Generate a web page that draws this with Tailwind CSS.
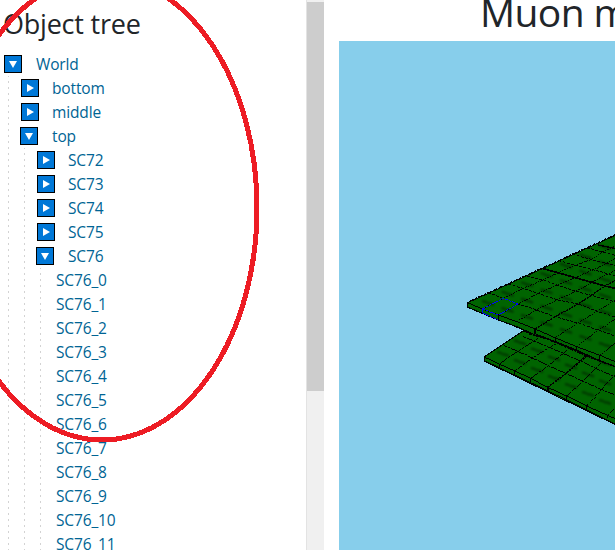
<!DOCTYPE html>
<html lang="en">
<head>
<meta charset="utf-8">
<title>Muon monitor</title>
<script src="https://cdn.jsdelivr.net/npm/@tailwindcss/browser@4"></script>
</head>
<body class="bg-white overflow-hidden">
<div class="relative flex w-[615px] h-[550px] overflow-hidden font-['Open_Sans','Noto_Sans',sans-serif]">
  <aside class="w-[306px] shrink-0 h-full overflow-hidden">
    <h3 class="h-[52px] pl-[3px] pt-[5px] text-[27px] leading-[38px] tracking-[-0.22px] text-[#212529] whitespace-nowrap">Object tree</h3>
    <div id="tree" class="text-[15.5px] leading-6 tracking-[-0.14px] text-[#006494] whitespace-nowrap"></div>
  </aside>
  <div class="w-[18px] shrink-0 h-full border-l border-[#e3e3e3] bg-[#f0f0f0] pt-[2px]">
    <div class="h-[389px] bg-[#cdcdcd]"></div>
  </div>
  <main class="ml-[15px] w-[276px] shrink-0 h-full flex flex-col">
    <h1 class="h-[41px] shrink-0 pl-[141px] text-[39px] leading-[52px] -mt-[14px] mb-[14px] tracking-[-0.6px] text-[#212529] whitespace-nowrap">Muon monitor</h1>
    <div class="flex-1 bg-[#87ceeb] overflow-hidden">
      <svg width="276" height="509" viewBox="339 41 276 509" fill="none" stroke="#000" shape-rendering="crispEdges">
        <defs>
          <filter id="soft"><feGaussianBlur stdDeviation="1"/></filter>
          <clipPath id="up"><path d="M467 303L616 235V362L600 356 577 347 556 338 535 328 517 322 498 315Z"/></clipPath>
          <clipPath id="lo"><path d="M484 357L523 331 616 367V420L608 416 587 406 567 396 548 387 531 378 515 371Z"/></clipPath>
        </defs>
        <!-- lower layer -->
        <path fill="#006400" d="M484 357L523 331 616 360V425L484 361Z"/>
        <g clip-path="url(#lo)"><g id="loMarks" filter="url(#soft)" stroke-opacity=".5" stroke-width="2" shape-rendering="auto"></g></g>
        <g transform="translate(455 325) scale(.33333)" stroke-width="3">
          <path d="M88 96L134 118 180 138 227 160 278 187 335 213 395 243 460 272 483 282M88 96L205 18M88 96V107L278 197 483 298M134 118V127M180 138V148M227 160V171M335 213V224M395 243V255M457 272V280"/>
          <path d="M278 184V197" stroke-width="6"/>
          <path stroke-dasharray="8 2" d="M134 116L188 79 252 38M180 138L232 99 285 66 320 48M227 160L280 122 340 73M335 213L383 170 438 115M395 243L440 192 480 150M457 272L483 247"/>
          <path stroke-width="5" stroke-dasharray="7 2" d="M278 187L330 148 394 93"/>
          <path d="M148 62L188 79 232 99 280 122 330 144 383 168 440 194 483 211M205 35L242 50 285 68 335 90 390 114 435 136 483 156M222 28L262 38 302 53 340 70 394 93 445 113 483 126" stroke-dasharray="9 2"/>
        </g>
        <!-- upper layer -->
        <path fill="#006400" d="M467 303L616 235V367L600 361 577 351 556 342 535 335 512 325 498 320 467 307Z"/>
        <g clip-path="url(#up)"><g id="upMarks" filter="url(#soft)" stroke-opacity=".5" stroke-width="2" shape-rendering="auto"></g></g>
        <g transform="translate(455 225) scale(.33333)" stroke-width="3">
          <path d="M37 233L82 252 130 270 185 290 240 312 302 339 365 365 435 391 483 411M37 233V246L130 285 183 304 240 329M302 339V352M365 365V376M435 391V408M130 270V285M240 326L302 350 365 375 435 407 483 425"/>
          <path stroke-dasharray="3 2" stroke-width="4" d="M37 232L483 28"/>
          <path stroke-width="5" d="M240 308V328"/>
          <g stroke-dasharray="5 3">
            <path d="M82 252L145 220 205 190 265 165 320 138 370 118 415 101 440 82 483 62M130 270L190 237 250 205 320 175 385 147 430 128 483 98M185 290L250 252 310 223 385 188 420 166 483 135"/>
            <path d="M302 337L365 296 430 257 483 223M365 365L430 315 483 281M435 391L483 352"/>
          </g>
          <path stroke-width="4" stroke-dasharray="7 2" d="M240 312L300 275 370 237 450 183 483 166"/>
          <g stroke-dasharray="9 4">
            <path d="M100 203L145 220 190 237 245 255 300 275 365 293 430 315 483 334M160 178L205 190 250 205 310 225 370 237 430 260 483 277M215 153L265 165 320 185 385 205 450 222 483 232"/>
            <path d="M310 107L365 122 425 137 483 153M352 88L415 105 483 122M395 68L440 80 483 92"/>
          </g>
          <path stroke-width="5" d="M262 130L350 155 450 183 483 191"/>
          <path stroke-width="4" d="M428 60L483 71"/>
          <path stroke="#00f" stroke-width="3" stroke-dasharray="8 3" d="M82 252L145 220 190 237 130 270 82 252V264L130 285"/>
        </g>
      </svg>
    </div>
  </main>
  <svg class="absolute inset-0 pointer-events-none" width="615" height="550" fill="none" shape-rendering="crispEdges">
    <ellipse cx="102" cy="208" rx="155" ry="232" stroke="#ed1c24" stroke-width="5"/>
  </svg>
</div>
<script>
  const leaves = Array.from({length: 12}, (_, i) => ({n: 'SC76_' + i}));
  const data = {n: 'World', open: [
    {n: 'bottom', shut: 1}, {n: 'middle', shut: 1},
    {n: 'top', open: [{n: 'SC72', shut: 1}, {n: 'SC73', shut: 1}, {n: 'SC74', shut: 1}, {n: 'SC75', shut: 1}, {n: 'SC76', open: leaves}]}
  ]};
  const box = (open) => `<span class="w-[18px] h-[18px] shrink-0 border border-black bg-[#0078d7] ${open ? 'ml-[4px] mr-[14px]' : 'ml-[4px] mr-[13px]'}"><svg width="16" height="16" fill="#fff"><path d="${open ? 'M4 5h8L8 12z' : 'M5 4v8l7-4z'}"/></svg></span>`;
  function node(d) {
    const icon = d.open || d.shut ? box(d.open) : '';
    const pad = d.shut ? 'pl-[1px]' : d.open ? '' : 'pl-[8px]';
    const kids = d.open ? `<ul class="ml-[8px] pl-[8px] bg-[linear-gradient(#d3d3d3_1px,transparent_1px,transparent_5px,#d3d3d3_5px)] bg-[length:1px_6px] bg-repeat-y">${d.open.map(node).join('')}</ul>` : '';
    const row = `<div class="flex items-center h-6 ${pad}">${icon}<span>${d.n}</span></div>`;
    return `<li class="list-none">${row}${kids}</li>`;
  }
  document.getElementById('tree').innerHTML = `<ul>${node(data)}</ul>`;

  // Faint volume labels printed on the detector cells
  function marks(id, ox, oy, ax, ay, bx, by, n, m) {
    let d = '';
    for (let i = 0; i < n; i++) for (let j = 0; j < m; j++) {
      const x = ox + ax * i + bx * j, y = oy + ay * i + by * j;
      d += `M${x - 5} ${y - 2}l4 1M${x - 1} ${y - 1}l3 2M${x + 2} ${y}l5 2`;
    }
    document.getElementById(id).innerHTML = `<path d="${d}"/>`;
  }
  marks('upMarks', 487, 303, 19.5, -9.3, 19.5, 7, 10, 9);
  marks('loMarks', 502, 354, 17, -11.5, 17, 8, 6, 9);
</script>
</body>
</html>
